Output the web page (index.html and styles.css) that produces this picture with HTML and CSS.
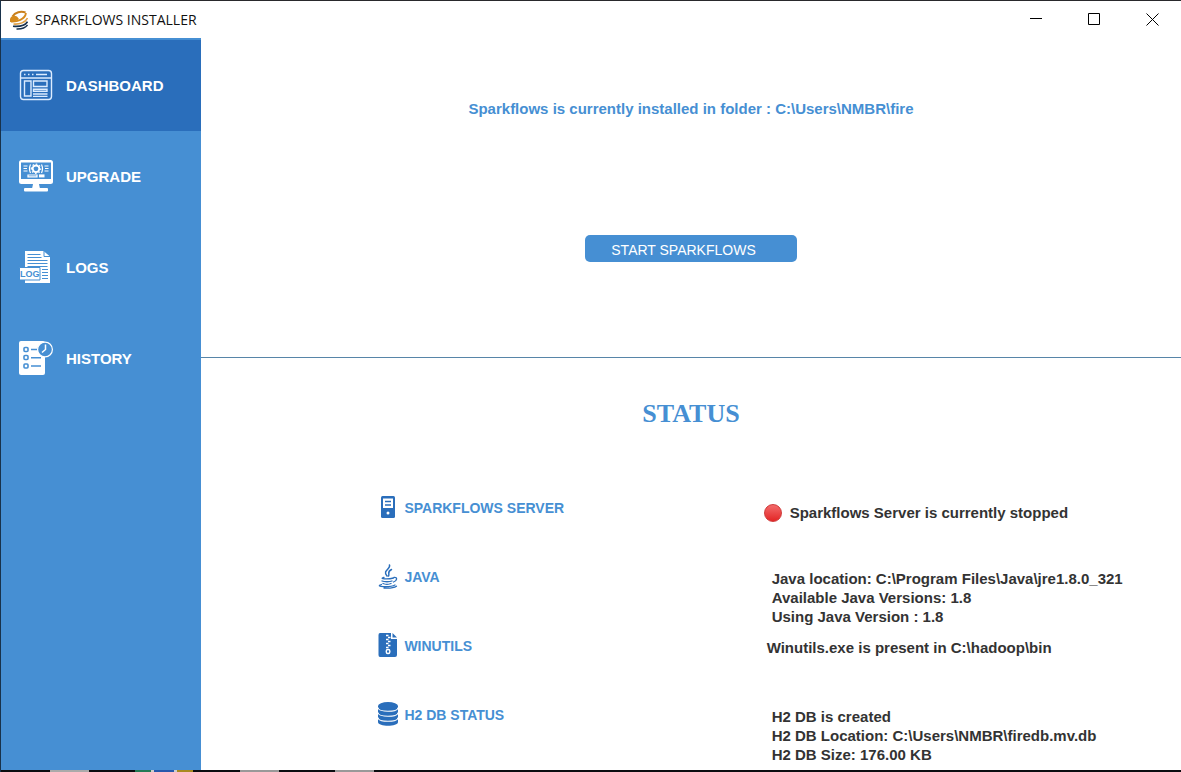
FILE: index.html
```html
<!DOCTYPE html>
<html lang="en">
<head>
<meta charset="utf-8">
<title>Sparkflows Installer</title>
<link rel="stylesheet" href="styles.css">
</head>
<body>
<div class="window">
  <header class="titlebar">
    <svg class="app-logo" viewBox="0 0 18 20" fill="none" aria-hidden="true">
      <path d="M2.500 6.500C5 2 11 .8 15.500 2.500" stroke="#c9801c" stroke-width="2"/>
      <path d="M1 11.500c6 .5 14-2 15-8.500" stroke="#d58a1d" stroke-width="1.800"/>
      <path d="M0 9c1-3 4-4 7-2.500L9 9c-2 2-5 3-9 3z" fill="#d58a1d"/>
      <path d="M3.500 14c6 .5 12-1.500 14-6" stroke="#e0a044" stroke-width="1.600"/>
      <path d="M3 16.200c6 .6 12-.7 14.500-4.500" stroke="#16304d" stroke-width="1.600"/>
      <path d="M6.500 19c5 .2 9-1.200 11-4" stroke="#16304d" stroke-width="1.400"/>
    </svg>
    <h1 class="app-title">SPARKFLOWS INSTALLER</h1>
    <div class="controls">
      <button class="control" aria-label="Minimize"><svg viewBox="0 0 13 13"><path d="M0 5.500h12"/></svg></button>
      <button class="control" aria-label="Maximize"><svg viewBox="0 0 13 13"><path d="M.5.5h11v11H.5z"/></svg></button>
      <button class="control" aria-label="Close"><svg viewBox="0 0 13 13"><path d="M.5.5l12 12M12.500.5l-12 12"/></svg></button>
    </div>
  </header>
  <div class="body">
    <nav class="sidebar">
      <button class="nav-item active">
        <svg class="nav-icon" viewBox="0 0 34 34" fill="none" stroke="#dcecff" stroke-width="1.400">
          <rect x="1.500" y="2.500" width="31" height="29" rx="3"/>
          <path d="M1.500 10h31M5 6.500h1.500M9 6.500h1.500M13 6.500h1.500M17 6.500h11"/>
          <path d="M5.500 13h6.500v15H5.500zM14.500 13h13.500v5.500H14.500zM14.500 21.200h13.500v2H14.500zM14 26h14.500M14 28.400h14.500"/>
        </svg>
        <span>DASHBOARD</span>
      </button>
      <button class="nav-item">
        <svg class="nav-icon" viewBox="0 0 34 34">
          <rect x="0" y="1" width="34" height="24" rx="2.500" fill="#fff"/>
          <path d="M2 3.500h30v16.500h-30z" fill="#468fd3"/>
          <path d="M14 25h6l1 5h-8z" fill="#fff"/><rect x="5" y="29" width="24" height="3.500" rx="1" fill="#fff"/>
          <g fill="none" stroke="#fff" stroke-width="1.200">
            <circle cx="17" cy="9.800" r="3.300" stroke-width="1.800"/>
            <path stroke-dasharray="1.500 2" d="M12.300 9.800a4.700 4.700 0 1 1 9.400 0a4.700 4.700 0 1 1-9.400 0"/>
            <path d="M11.500 5.500q-2 4.300 0 8.500M22.500 5.500q2 4.300 0 8.500M4.500 7h4M4.500 9.500h3.500M4.500 12h4M25.500 7h4M26 9.500h3.500M25.500 12h4"/>
            <path d="M9 16h9v1.800H9z"/>
          </g>
          <path d="M20 15.400h5.500v3H20z" fill="#fff"/>
        </svg>
        <span>UPGRADE</span>
      </button>
      <button class="nav-item">
        <svg class="nav-icon" viewBox="0 0 34 34">
          <path d="M6 1h18.500l6.500 5.500V33H6z" fill="#fff"/>
          <path d="M8.500 4.500h13M8.500 7.500h14M8.500 10.500h20M8.500 13.500h20M8.500 16.500h20M23 19.500h6M23 22.500h6M23 25.500h6M23 28.500h6" stroke="#468fd3" stroke-width="1.200"/>
          <path d="M25 1v5.500h6" fill="none" stroke="#468fd3" stroke-width="1"/>
          <path d="M.5 17.500h20.500v12.500H.5z" fill="#fff" stroke="#468fd3"/>
          <text class="log-mark" x="10.700" y="27" text-anchor="middle">LOG</text>
        </svg>
        <span>LOGS</span>
      </button>
      <button class="nav-item">
        <svg class="nav-icon" viewBox="0 0 34 34">
          <rect x="0" y="0" width="26" height="34" rx="2" fill="#fff"/>
          <g fill="none" stroke="#468fd3" stroke-width="1.600">
            <rect x="5" y="6.500" width="4" height="4" rx="1"/><rect x="5" y="14.500" width="4" height="4" rx="1"/><rect x="5" y="23" width="4" height="4" rx="1"/>
            <path d="M12 8.500h6M12 16.800h10M12 25h10"/>
          </g>
          <circle cx="26" cy="8.500" r="7.400" fill="#468fd3" stroke="#fff" stroke-width="1.200"/>
          <path d="M26.500 3.500V8.500l-3.500 3" fill="none" stroke="#fff" stroke-width="1.500"/>
        </svg>
        <span>HISTORY</span>
      </button>
    </nav>
    <main class="content">
      <section class="launch">
        <p class="install-path">Sparkflows is currently installed in folder : C:\Users\NMBR\fire</p>
        <button class="start">START SPARKFLOWS</button>
      </section>
      <section class="status">
        <h2 class="status-title">STATUS</h2>
        <dl class="status-list">
          <div class="status-row">
            <dt class="label">
              <svg class="label-icon" viewBox="0 0 20 26"><rect x="3" y="1" width="14" height="22" rx="1.500" fill="#2a6ebb"/><path d="M5 3.500h10v9.500H5z" fill="#fff"/><path d="M7 6.500h6M7 10h6" stroke="#2a6ebb" stroke-width="1.500"/><circle cx="10" cy="18" r="1.500" fill="#fff"/></svg>
              SPARKFLOWS SERVER
            </dt>
            <dd class="value server"><span class="dot"></span>Sparkflows Server is currently stopped</dd>
          </div>
          <div class="status-row">
            <dt class="label">
              <svg class="label-icon" viewBox="0 0 20 26" fill="none" stroke="#2a6ebb" stroke-width="1.300" stroke-linecap="round"><path d="M11.500 1c1.500 4-7.500 5.500-2.500 11M13.500 5.500c-5 2.500-1.500 4-3 6.500" stroke-width="1.500"/><path d="M6 13.500c-6 1.500 4 2 9.500.5M4 17c2 1 8 1 10 0M5 19.500c2 1 6 1 8 0M16 13.500c4-.5 3 3.500-.5 4.500M3.500 20.500c-8 2.500 9 3 13.500.5M6 24c5 .3 10-.2 12.500-1.800"/></svg>
              JAVA
            </dt>
            <dd class="value java">Java location: C:\Program Files\Java\jre1.8.0_321<br>Available Java Versions: 1.8<br>Using Java Version : 1.8</dd>
          </div>
          <div class="status-row">
            <dt class="label">
              <svg class="label-icon" viewBox="0 0 20 26"><path d="M2 0h11v6h6v16q0 2-2 2H2q-1.500 0-1.500-2V2q0-2 1.500-2z" fill="#2a6ebb"/><path d="M14.500 0l4.500 4.500h-4.500z" fill="#2a6ebb"/><path d="M8 2.500h2.500M10 4.500h2.500M8 6.500h2.500M10 8.500h2.500M8 10.500h2.500M10 12.500h2.500M8 14.500h2.500" stroke="#fff" stroke-width="1.600"/><rect x="8.300" y="16.500" width="3.500" height="4" rx="1.500" fill="none" stroke="#fff" stroke-width="1.400"/></svg>
              WINUTILS
            </dt>
            <dd class="value winutils">Winutils.exe is present in C:\hadoop\bin</dd>
          </div>
          <div class="status-row">
            <dt class="label">
              <svg class="label-icon" viewBox="0 0 20 26"><path d="M0 4v16c0 5 20 5 20 0V4z" fill="#2a6ebb"/><ellipse cx="10" cy="4" rx="10" ry="4" fill="#2a6ebb"/><path d="M0 5.500c0 5 20 5 20 0M0 10.500c0 5 20 5 20 0M0 15.500c0 5 20 5 20 0" fill="none" stroke="#fff" stroke-width="1.100"/></svg>
              H2 DB STATUS
            </dt>
            <dd class="value database">H2 DB is created<br>H2 DB Location: C:\Users\NMBR\firedb.mv.db<br>H2 DB Size: 176.00 KB</dd>
          </div>
        </dl>
      </section>
    </main>
  </div>
</div>
</body>
</html>
```
FILE: styles.css
```css
* { box-sizing: border-box; }

body {
  margin: 0;
  font-family: "Liberation Sans", Arial, sans-serif;
  background: #fff;
}

h1, h2, p, dl, dt, dd { margin: 0; }

button {
  border: 0;
  font-family: inherit;
  cursor: pointer;
}

.window {
  display: flex;
  flex-direction: column;
  min-height: 100vh;
  border-top: 1px solid #29292c;
  border-left: 1px solid #18324b;
}

/* strip of the desktop taskbar under the window */
.window::after {
  content: "";
  height: 2px;
  background: linear-gradient(90deg,
    #0b0d10 49px, #aaa 49px 88px, #0b0d10 88px 134px,
    #247a56 134px 150px, #ccc 150px 153px, #2758ac 153px 173px,
    #ccc 173px 176px, #a98a20 176px 192px, #0b0d10 192px 239px,
    #999 239px 278px, #0b0d10 278px 334px, #999 334px 373px, #0b0d10 373px);
}

.titlebar {
  display: flex;
  align-items: center;
  height: 37px;
  padding-left: 9px;
}

.app-logo { width: 18px; height: 20px; }

.app-title {
  margin-left: 7px;
  font: 400 14px/20px "Open Sans", "Noto Sans", sans-serif;
  color: #111;
}

.controls { display: flex; margin-left: auto; }

.control {
  display: flex;
  align-items: center;
  justify-content: center;
  width: 58px;
  height: 36px;
  padding: 0;
  background: none;
}

.control svg {
  width: 13px;
  height: 13px;
  fill: none;
  stroke: #000;
}

.body { display: flex; flex: 1; }

.sidebar {
  flex: none;
  width: 200px;
  padding-top: 2px;
  background: #468fd3;
}

.nav-item {
  display: flex;
  align-items: center;
  gap: 13px;
  width: 100%;
  height: 91px;
  padding: 0 18px;
  background: none;
  color: #fff;
  font-size: 15px;
  font-weight: 700;
}

.nav-item.active { background: #2a6ebb; }

.nav-icon {
  width: 34px;
  height: 34px;
  margin-bottom: 2px;
}

.log-mark {
  fill: #468fd3;
  font: 700 9px "Liberation Sans", Arial, sans-serif;
}

.content { flex: 1; color: #333; }

.launch {
  display: flex;
  flex-direction: column;
  align-items: center;
  height: 320px;
  padding-top: 61px;
  border-bottom: 1px solid #5785a8;
}

.install-path {
  color: #468fd3;
  font-size: 15px;
  font-weight: 700;
  line-height: 19px;
}

.start {
  width: 212px;
  height: 27px;
  margin-top: 117px;
  padding: 2px 15px 0 0;
  border-radius: 5px;
  background: #468fd3;
  color: #fff;
  font-size: 14px;
}

.status-title {
  padding-top: 41px;
  color: #468fd3;
  font: 700 26px/30px "Liberation Serif", "Times New Roman", serif;
  text-align: center;
}

.status-list { padding-top: 66px; }

.status-row {
  display: grid;
  grid-template-columns: 386fr 417fr;
  align-items: start;
  min-height: 69px;
  padding-left: 18%;
}

.status-row:last-child { min-height: 63px; }

.label {
  display: flex;
  align-items: center;
  gap: 6px;
  padding-left: 1px;
  color: #468fd3;
  font-size: 14px;
  font-weight: 700;
}

.label-icon { width: 20px; height: 26px; }

.value {
  padding-top: 5px;
  font-size: 15px;
  font-weight: 700;
  line-height: 19px;
}

.server {
  display: flex;
  align-items: center;
  gap: 8px;
  line-height: 26px;
}

.java, .database { padding-left: 8px; }

.winutils { padding-left: 3px; }

.dot {
  width: 18px;
  height: 18px;
  border: 1px solid #cf3a3a;
  border-radius: 50%;
  background: linear-gradient(#f36b6b, #e32626);
}
```
